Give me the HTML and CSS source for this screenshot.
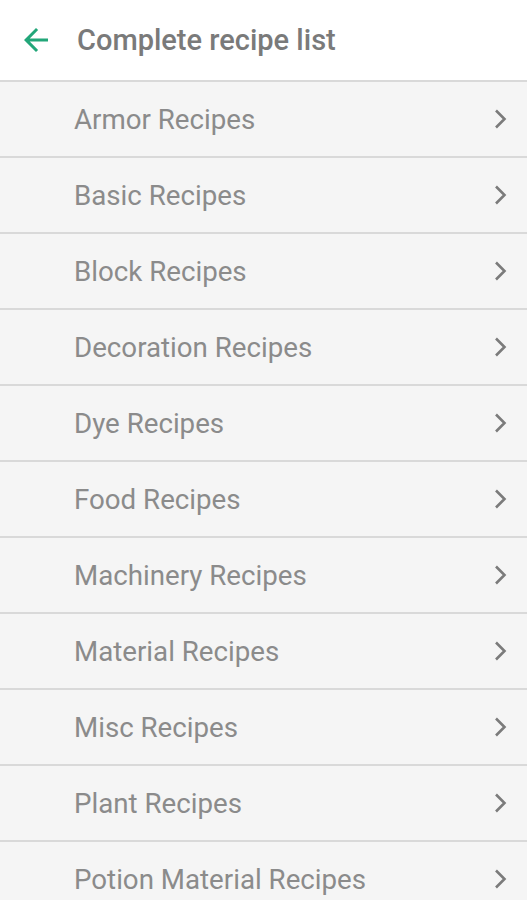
FILE: index.html
```html
<!DOCTYPE html>
<html lang="en">
<head>
    <meta charset="UTF-8">
    <meta name="viewport" content="width=device-width, initial-scale=1.0">
    <title>Complete recipe list</title>
    <link rel="stylesheet" href="styles.css">
</head>
<body>
    <header class="app-bar">
        <svg class="back-icon" width="36" height="36" viewBox="0 0 24 24">
            <path d="M20 11H7.83l5.59-5.59L12 4l-8 8 8 8 1.41-1.41L7.83 13H20v-2z" fill="#22a679"/>
        </svg>
        <h1>Complete recipe list</h1>
    </header>
    <ul class="recipe-list">
        <li class="recipe-item"><span>Armor Recipes</span><svg class="chevron" viewBox="0 0 13 20"><path d="M2 1.5l8.5 8.5-8.5 8.5" fill="none" stroke="#7b7b7b" stroke-width="2.6"/></svg></li>
        <li class="recipe-item"><span>Basic Recipes</span><svg class="chevron" viewBox="0 0 13 20"><path d="M2 1.5l8.5 8.5-8.5 8.5" fill="none" stroke="#7b7b7b" stroke-width="2.6"/></svg></li>
        <li class="recipe-item"><span>Block Recipes</span><svg class="chevron" viewBox="0 0 13 20"><path d="M2 1.5l8.5 8.5-8.5 8.5" fill="none" stroke="#7b7b7b" stroke-width="2.6"/></svg></li>
        <li class="recipe-item"><span>Decoration Recipes</span><svg class="chevron" viewBox="0 0 13 20"><path d="M2 1.5l8.5 8.5-8.5 8.5" fill="none" stroke="#7b7b7b" stroke-width="2.6"/></svg></li>
        <li class="recipe-item"><span>Dye Recipes</span><svg class="chevron" viewBox="0 0 13 20"><path d="M2 1.5l8.5 8.5-8.5 8.5" fill="none" stroke="#7b7b7b" stroke-width="2.6"/></svg></li>
        <li class="recipe-item"><span>Food Recipes</span><svg class="chevron" viewBox="0 0 13 20"><path d="M2 1.5l8.5 8.5-8.5 8.5" fill="none" stroke="#7b7b7b" stroke-width="2.6"/></svg></li>
        <li class="recipe-item"><span>Machinery Recipes</span><svg class="chevron" viewBox="0 0 13 20"><path d="M2 1.5l8.5 8.5-8.5 8.5" fill="none" stroke="#7b7b7b" stroke-width="2.6"/></svg></li>
        <li class="recipe-item"><span>Material Recipes</span><svg class="chevron" viewBox="0 0 13 20"><path d="M2 1.5l8.5 8.5-8.5 8.5" fill="none" stroke="#7b7b7b" stroke-width="2.6"/></svg></li>
        <li class="recipe-item"><span>Misc Recipes</span><svg class="chevron" viewBox="0 0 13 20"><path d="M2 1.5l8.5 8.5-8.5 8.5" fill="none" stroke="#7b7b7b" stroke-width="2.6"/></svg></li>
        <li class="recipe-item"><span>Plant Recipes</span><svg class="chevron" viewBox="0 0 13 20"><path d="M2 1.5l8.5 8.5-8.5 8.5" fill="none" stroke="#7b7b7b" stroke-width="2.6"/></svg></li>
        <li class="recipe-item"><span>Potion Material Recipes</span><svg class="chevron" viewBox="0 0 13 20"><path d="M2 1.5l8.5 8.5-8.5 8.5" fill="none" stroke="#7b7b7b" stroke-width="2.6"/></svg></li>
    </ul>
</body>
</html>
```

FILE: styles.css
```css
body {
    font-family: Roboto, "Noto Sans", sans-serif;
    background-color: #f5f5f5;
    margin: 0;
    overflow: hidden;
}

.app-bar {
    height: 80px;
    background-color: #fff;
    display: flex;
    align-items: center;
    padding-left: 18px;
    box-sizing: border-box;
}

.back-icon {
    flex-shrink: 0;
}

.app-bar h1 {
    margin: 0 0 0 23px;
    font-size: 29px;
    font-weight: 500;
    color: #7a7a7a;
}

.recipe-list {
    list-style: none;
    margin: 0;
    padding: 0;
}

.recipe-item {
    height: 76px;
    box-sizing: border-box;
    border-top: 2px solid #d9d9d9;
    display: flex;
    align-items: center;
    justify-content: space-between;
    padding: 0 20px 0 74px;
    font-size: 27.7px;
    color: #8b8b8b;
}

.chevron {
    width: 13px;
    height: 20px;
}
```
